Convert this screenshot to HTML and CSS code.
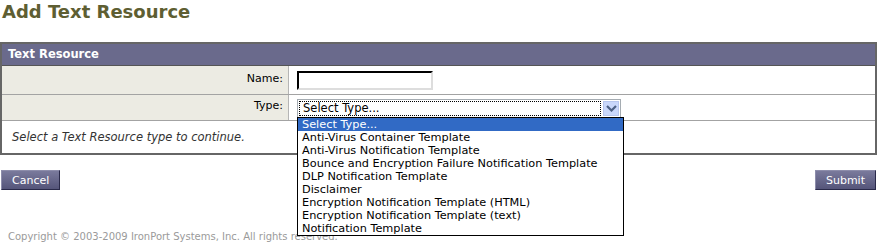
FILE: index.html
```html
<!DOCTYPE html>
<html lang="en">
<head>
  <meta charset="UTF-8" />
  <title>Add Text Resource</title>
  <link rel="stylesheet" href="styles.css">
</head>
<body>

<h1 class="title">Add Text Resource</h1>

<div class="panel">
  <div class="panel-head">Text Resource</div>
  <div class="row row-name">
    <div class="label">Name:</div>
    <div class="value"><input type="text" class="name-input" /></div>
  </div>
  <div class="row row-type">
    <div class="label">Type:</div>
    <div class="value">
      <div class="select-box">
        <div class="select-current"><span class="focus-ring">Select Type...</span></div>
        <div class="select-arrow">
          <svg width="11" height="7" viewBox="0 0 11 7"><path d="M1 1 L5.5 5.5 L10 1" fill="none" stroke="#4d6185" stroke-width="2.2"/></svg>
        </div>
        <ul class="select-list">
          <li class="selected">Select Type...</li>
          <li>Anti-Virus Container Template</li>
          <li>Anti-Virus Notification Template</li>
          <li>Bounce and Encryption Failure Notification Template</li>
          <li>DLP Notification Template</li>
          <li>Disclaimer</li>
          <li>Encryption Notification Template (HTML)</li>
          <li>Encryption Notification Template (text)</li>
          <li>Notification Template</li>
        </ul>
      </div>
    </div>
  </div>
  <div class="hint">Select a Text Resource type to continue.</div>
</div>

<div class="buttons">
  <button class="btn">Cancel</button>
  <button class="btn">Submit</button>
</div>

<div class="copyright">Copyright &copy; 2003-2009 IronPort Systems, Inc. All rights reserved.</div>

</body>
</html>
```

FILE: styles.css
```css
* {
  box-sizing: border-box;
}
body {
  margin: 0;
  background: #fff;
  font-family: "DejaVu Sans", Verdana, sans-serif;
  font-size: 11px;
  color: #000;
}
.title {
  margin: 0;
  padding: 0 0 0 2px;
  height: 42px;
  font-size: 18px;
  line-height: 24px;
  font-weight: bold;
  color: #5e5e32;
}

.panel {
  border: 2px solid #666;
}
.panel-head {
  height: 22px;
  padding-left: 6px;
  background: #6a6a8c;
  border-bottom: 1px solid #555;
  color: #fff;
  font-size: 11.5px;
  font-weight: bold;
  line-height: 21px;
}
.row {
  display: grid;
  grid-template-columns: 287px 1fr;
  border-bottom: 1px solid #a3a3a3;
}
.row-name {
  height: 29px;
}
.row-type {
  height: 26px;
}
.label {
  background: #ecebe3;
  border-right: 1px solid #b5b5b5;
  text-align: right;
  padding-right: 5px;
  line-height: 26px;
}
.row-type .label {
  line-height: 22px;
}
.value {
  padding-left: 8px;
  display: flex;
  align-items: center;
}
.name-input {
  width: 136px;
  height: 19px;
  border: 2px inset #777;
  border-right-color: #ddd;
  border-bottom-color: #ddd;
  border-top-color: #555;
  border-left-color: #555;
  background: #fff;
}

.select-box {
  position: relative;
  width: 324px;
  height: 19px;
  margin-top: 1px;
  border: 1px solid #a5acb2;
  display: flex;
  background: #fff;
}
.select-current {
  flex: 1;
  padding: 1px;
}
.focus-ring {
  display: block;
  height: 15px;
  border: 1px dotted #000;
  padding-left: 3px;
  line-height: 13px;
  font-size: 11.5px;
}
.select-arrow {
  width: 16px;
  margin: 1px;
  border: 1px solid #b7c6ee;
  background: #c9d7fb;
  display: flex;
  align-items: center;
  justify-content: center;
}
.select-list {
  position: absolute;
  left: -1px;
  top: 17px;
  width: 327px;
  margin: 0;
  padding: 0;
  list-style: none;
  background: #fff;
  border: 1px solid #000;
  z-index: 10;
}
.select-list li {
  height: 13px;
  line-height: 13px;
  padding-left: 4px;
  font-size: 11.3px;
  white-space: nowrap;
}
.select-list li.selected {
  background: #316ac5;
  color: #fff;
}

.hint {
  height: 32px;
  padding-left: 10px;
  line-height: 32px;
  font-size: 11.5px;
  font-style: italic;
  color: #333;
}

.buttons {
  display: flex;
  justify-content: space-between;
  margin-top: 15px;
  padding: 0 1px;
}
.btn {
  height: 20px;
  padding: 0 10px;
  border: 1px solid #2a2a4a;
  border-top-color: #8d8dab;
  border-left-color: #8d8dab;
  background: linear-gradient(#7a7a9c, #55557a);
  color: #fff;
  font-family: "DejaVu Sans", Verdana, sans-serif;
  font-size: 11px;
}

.copyright {
  margin-top: 41px;
  padding-left: 8px;
  font-size: 10px;
  color: #9a9a9a;
}
```
